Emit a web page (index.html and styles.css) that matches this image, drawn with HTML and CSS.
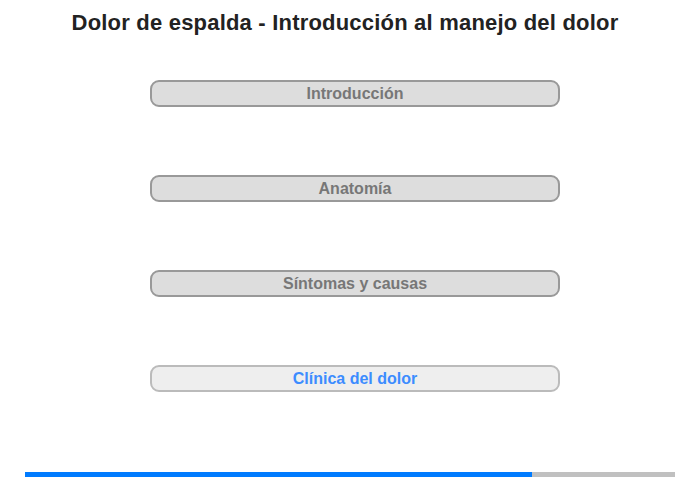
FILE: index.html
```html
<!DOCTYPE html>
<html lang="es">
<head>
<meta charset="utf-8">
<title>Dolor de espalda</title>
<link rel="stylesheet" href="styles.css">
</head>
<body>
<div class="page">
  <h1 class="title">Dolor de espalda - Introducción al manejo del dolor</h1>
  <div class="menu">
    <div class="item">Introducción</div>
    <div class="item">Anatomía</div>
    <div class="item">Síntomas y causas</div>
    <div class="item active">Clínica del dolor</div>
  </div>
  <div class="progress"><div class="fill" style="width:78%"></div></div>
</div>
</body>
</html>
```
FILE: styles.css
```css
html, body {
  margin: 0;
  padding: 0;
  background: #fff;
}
.page {
  width: 700px;
  height: 480px;
  display: flex;
  flex-direction: column;
  align-items: center;
  font-family: "Liberation Sans", Arial, sans-serif;
}
.title {
  margin: 10px 10px 0 0;
  font-size: 22px;
  line-height: 26px;
  letter-spacing: 0.2px;
  font-weight: bold;
  color: #222;
  text-align: center;
}
.menu {
  margin-top: 44px;
  padding-left: 10px;
  display: flex;
  flex-direction: column;
  gap: 68px;
}
.item {
  box-sizing: border-box;
  width: 410px;
  height: 27px;
  border: 2px solid #999;
  border-radius: 9px;
  background: #ddd;
  color: #777;
  font-size: 16px;
  font-weight: bold;
  line-height: 23px;
  text-align: center;
}
.item.active {
  background: #eee;
  border-color: #bbb;
  color: #3c8cff;
}
.progress {
  margin-top: auto;
  margin-bottom: 3px;
  width: 650px;
  height: 5px;
  background: #c0c0c0;
}
.fill {
  height: 100%;
  background: #007bff;
}
```
